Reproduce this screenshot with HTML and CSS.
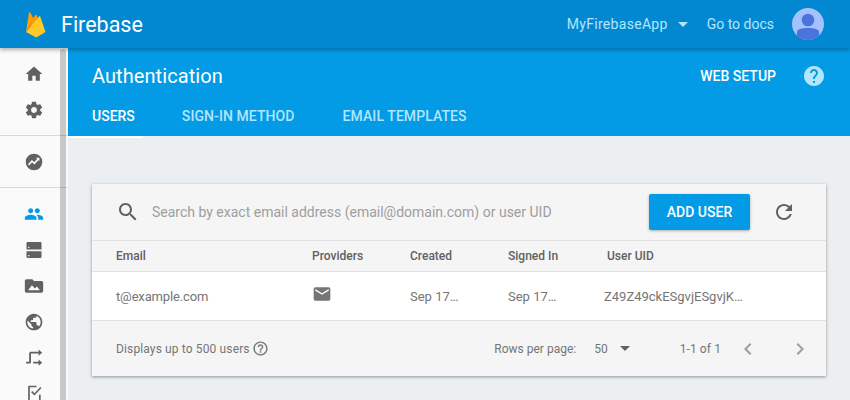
FILE: index.html
```html
<!DOCTYPE html>
<html lang="en">
<head>
  <meta charset="UTF-8">
  <title>Firebase Authentication</title>
  <link rel="stylesheet" href="styles.css">
</head>
<body>
  <header class="topbar">
    <svg class="logo" viewBox="0 0 20 27"><path fill="#ffa000" d="M0 21 3 1.500c.1-.6.8-.7 1.100-.2L7.800 8.200 9.500 5 0 21z"/><path fill="#f57c00" d="M11 12 8 6.400 0 21z"/><path fill="#ffca28" d="M0 21 13.300 5.200c.3-.3.8-.2.900.3L19.500 21l-8.400 5c-.6.300-1.200.300-1.800 0z"/><path fill="#ffa000" d="M8.400 5.300 9.500 4c.3-.4.700-.4.900 0L12 7 3.800 16z"/></svg>
    <span class="brand">Firebase</span>
    <nav class="topnav">
      <span class="project">MyFirebaseApp</span>
      <span class="caret caret-light"></span>
      <span class="docs">Go to docs</span>
      <svg class="avatar" viewBox="0 0 32 32"><clipPath id="avatar-clip"><circle cx="16" cy="16" r="16"/></clipPath><circle cx="16" cy="16" r="16" fill="#a4c1fb"/><circle cx="16" cy="12" r="6.300" fill="#4a73dc"/><path clip-path="url(#avatar-clip)" fill="#4a73dc" d="M5 32v-8c0-2.800 5-4 11-4s11 1.200 11 4v8z"/></svg>
    </nav>
  </header>

  <div class="frame">
    <aside class="sidebar">
      <div class="nav-group">
        <div class="nav-item"><svg viewBox="0 0 24 24"><path d="M10 20v-6h4v6h5v-8h3L12 3 2 12h3v8z"/></svg></div>
        <div class="nav-item"><svg viewBox="0 0 24 24"><path d="M19.430 12.980c.04-.32.07-.64.07-.98s-.03-.66-.07-.98l2.110-1.650c.19-.15.24-.42.12-.64l-2-3.460c-.12-.22-.39-.3-.61-.22l-2.490 1c-.52-.4-1.080-.73-1.690-.98l-.38-2.650C14.460 2.180 14.250 2 14 2h-4c-.25 0-.46.18-.49.42l-.38 2.650c-.61.25-1.170.59-1.690.98l-2.490-1c-.23-.09-.49 0-.61.22l-2 3.460c-.13.22-.07.49.12.64l2.110 1.650c-.04.32-.07.65-.07.98s.03.66.07.98l-2.110 1.650c-.19.15-.24.42-.12.64l2 3.460c.12.22.39.3.61.22l2.490-1c.52.4 1.080.73 1.690.98l.38 2.650c.03.24.24.42.49.42h4c.25 0 .46-.18.49-.42l.38-2.650c.61-.25 1.170-.59 1.690-.98l2.490 1c.23.09.49 0 .61-.22l2-3.460c.12-.22.07-.49-.12-.64l-2.110-1.650zM12 15.500c-1.930 0-3.500-1.570-3.500-3.500s1.570-3.500 3.500-3.500 3.500 1.570 3.500 3.500-1.570 3.500-3.500 3.500z"/></svg></div>
      </div>
      <div class="nav-group">
        <div class="nav-item"><svg viewBox="0 0 24 24"><circle cx="12" cy="12" r="10"/><path class="cut" d="M5.500 15.500 9.500 11l3 2.500L17 8.500"/><path class="cut-fill" d="M14.500 7H18.500V11z"/></svg></div>
      </div>
      <div class="nav-group">
        <div class="nav-item active"><svg viewBox="0 0 24 24"><path d="M16 11c1.660 0 2.990-1.340 2.990-3S17.660 5 16 5c-1.660 0-3 1.340-3 3s1.340 3 3 3zm-8 0c1.660 0 2.990-1.340 2.990-3S9.660 5 8 5C6.340 5 5 6.340 5 8s1.340 3 3 3zm0 2c-2.330 0-7 1.170-7 3.500V19h14v-2.500c0-2.330-4.670-3.500-7-3.500zm8 0c-.29 0-.62.02-.97.05 1.160.84 1.970 1.970 1.970 3.450V19h6v-2.500c0-2.330-4.670-3.500-7-3.500z"/></svg></div>
        <div class="nav-item"><svg viewBox="0 0 24 24"><path fill-rule="evenodd" d="M4 2.500h16c.55 0 1 .45 1 1v7.800H3V3.500c0-.55.45-1 1-1zM3 13.500h18v7c0 .55-.45 1-1 1H4c-.55 0-1-.45-1-1zM5 8v1.500h1.500V8zm0 10v1.500h1.500V18z"/></svg></div>
        <div class="nav-item"><svg viewBox="0 0 24 24"><path d="M20 6h-8l-2-2H3C1.900 4 1 4.900 1 6v12c0 1.100.9 2 2 2h18c1.100 0 2-.9 2-2V8c0-1.100-.9-2-2-2zM5 17l4.500-6 3.500 4 2.500-2.500L19 17H5z"/></svg></div>
        <div class="nav-item"><svg viewBox="0 0 24 24"><path d="M12 2C6.480 2 2 6.480 2 12s4.480 10 10 10 10-4.480 10-10S17.520 2 12 2zm-1 17.930c-3.950-.49-7-3.850-7-7.930 0-.62.08-1.210.21-1.790L9 15v1c0 1.100.9 2 2 2v1.930zm6.900-2.540c-.26-.81-1-1.390-1.900-1.390h-1v-3c0-.55-.45-1-1-1H8v-2h2c.55 0 1-.45 1-1V7h2c1.100 0 2-.9 2-2v-.41c2.930 1.190 5 4.060 5 7.410 0 2.080-.8 3.970-2.100 5.390z"/></svg></div>
        <div class="nav-item"><svg viewBox="0 0 24 24"><path d="M2.500 16.500h3.700V6.800c0-1.600 1-2.300 2.400-2.300h8.900V1.800l4.300 3.800-4.300 3.800V6.700H8.400V17c0 1-.6 1.700-1.600 1.700H2.500zM11 16.500h6.500v-2.700l4.300 3.800-4.300 3.800v-2.700H11z"/></svg></div>
        <div class="nav-item"><svg viewBox="0 0 24 24"><path d="M6.500 2H15v2H7v16h11v-7h2v7.500c0 1-.5 1.500-1.500 1.500h-12c-1 0-1.500-.5-1.500-1.500v-17C5 2.500 5.500 2 6.500 2zM8.500 10 10 8.500l2.500 2.500 7-7.500L21 4.900l-8.500 9z"/></svg></div>
      </div>
      <div class="scrollbar"></div>
    </aside>

    <main class="main">
      <section class="subheader">
        <div class="title-row">
          <h1>Authentication</h1>
          <span class="setup">WEB SETUP</span>
          <svg class="help" viewBox="0 0 24 24"><path d="M12 2C6.480 2 2 6.480 2 12s4.480 10 10 10 10-4.480 10-10S17.520 2 12 2zm1 17h-2v-2h2v2zm2.070-7.750l-.9.92C13.450 12.900 13 13.500 13 15h-2v-.5c0-1.100.45-2.100 1.170-2.830l1.240-1.260c.37-.36.59-.86.59-1.410 0-1.100-.9-2-2-2s-2 .9-2 2H8c0-2.210 1.790-4 4-4s4 1.790 4 4c0 .88-.36 1.680-.93 2.250z"/></svg>
        </div>
        <div class="tabs">
          <span class="tab tab-active">USERS</span>
          <span class="tab">SIGN-IN METHOD</span>
          <span class="tab">EMAIL TEMPLATES</span>
        </div>
      </section>

      <section class="content">
        <div class="card">
          <div class="toolbar">
            <svg class="search-icon" viewBox="0 0 24 24"><path d="M15.500 14h-.79l-.28-.27C15.410 12.590 16 11.110 16 9.500 16 5.910 13.090 3 9.500 3S3 5.910 3 9.500 5.910 16 9.500 16c1.610 0 3.090-.59 4.230-1.570l.27.28v.79l5 4.990L20.490 19l-4.990-5zm-6 0C7.010 14 5 11.990 5 9.500S7.010 5 9.500 5 14 7.010 14 9.500 11.990 14 9.500 14z"/></svg>
            <span class="search-text">Search by exact email address (email@domain.com) or user UID</span>
            <button class="add-user">ADD USER</button>
            <svg class="refresh" viewBox="0 0 24 24"><path d="M17.650 6.350C16.200 4.900 14.210 4 12 4c-4.420 0-7.990 3.580-7.990 8s3.570 8 7.990 8c3.730 0 6.840-2.550 7.730-6h-2.080c-.82 2.330-3.040 4-5.650 4-3.310 0-6-2.690-6-6s2.690-6 6-6c1.660 0 3.140.69 4.220 1.780L13 11h7V4l-2.350 2.350z"/></svg>
          </div>
          <div class="row head-row">
            <span class="col-email">Email</span>
            <span class="col-providers">Providers</span>
            <span class="col-created">Created</span>
            <span class="col-signed">Signed In</span>
            <span class="col-uid">User UID</span>
          </div>
          <div class="row user-row">
            <span class="col-email user-email">t@example.com</span>
            <span class="col-providers"><svg class="mail" viewBox="0 0 24 24"><path d="M20 4H4c-1.100 0-1.990.9-1.990 2L2 18c0 1.100.9 2 2 2h16c1.100 0 2-.9 2-2V6c0-1.100-.9-2-2-2zm0 4l-8 5-8-5V6l8 5 8-5v2z"/></svg></span>
            <span class="col-created">Sep 17…</span>
            <span class="col-signed">Sep 17…</span>
            <span class="col-uid uid-value">Z49Z49ckESgvjESgvjK…</span>
          </div>
          <div class="footer">
            <span class="limit">Displays up to 500 users</span>
            <svg class="info" viewBox="0 0 24 24"><path d="M11 18h2v-2h-2v2zm1-16C6.480 2 2 6.480 2 12s4.480 10 10 10 10-4.480 10-10S17.520 2 12 2zm0 18c-4.410 0-8-3.590-8-8s3.590-8 8-8 8 3.590 8 8-3.590 8-8 8zm0-14c-2.210 0-4 1.790-4 4h2c0-1.100.9-2 2-2s2 .9 2 2c0 2-3 1.750-3 5h2c0-2.250 3-2.500 3-5 0-2.210-1.790-4-4-4z"/></svg>
            <span class="rows-label">Rows per page:</span>
            <span class="rows-value">50</span>
            <span class="caret"></span>
            <span class="range">1-1 of 1</span>
            <svg class="chev" viewBox="0 0 24 24"><path d="M15.410 7.410L14 6l-6 6 6 6 1.410-1.410L10.830 12z"/></svg>
            <svg class="chev chev-next" viewBox="0 0 24 24"><path d="M10 6L8.590 7.410 13.170 12l-4.580 4.590L10 18l6-6z"/></svg>
          </div>
        </div>
      </section>
    </main>
  </div>
</body>
</html>
```

FILE: styles.css
```css
* {
  box-sizing: border-box;
}

html,
body {
  height: 400px;
  margin: 0;
  overflow: hidden;
}

body {
  font-family: Roboto, sans-serif;
  font-size: 13px;
  color: #757575;
  background-color: #eceff1;
}

svg {
  display: block;
  fill: currentColor;
  flex: none;
}

/* top bar */
.topbar {
  position: relative;
  z-index: 2;
  display: flex;
  align-items: center;
  height: 48px;
  padding: 0 26px;
  background-color: #0288d1;
  box-shadow: 0 2px 4px rgba(0, 0, 0, 0.3);
}

.logo {
  width: 20px;
  height: 27px;
}

.brand {
  margin-left: 15px;
  font-size: 21.5px;
  color: #fff;
}

.topnav {
  display: flex;
  align-items: center;
  margin-left: auto;
  font-size: 14px;
  color: #b3e5fc;
}

.project {
  margin-right: 10px;
  letter-spacing: 0.3px;
}

.docs {
  margin-left: 19px;
  margin-right: 18px;
}

.avatar {
  width: 32px;
  height: 32px;
}

.caret {
  width: 0;
  height: 0;
  border-left: 5px solid transparent;
  border-right: 5px solid transparent;
  border-top: 5px solid #616161;
}

.caret-light {
  border-top-color: #b3e5fc;
}

/* left nav */
.frame {
  display: flex;
  height: 352px;
  overflow: hidden;
}

.sidebar {
  position: relative;
  flex: none;
  width: 68px;
  height: 352px;
  overflow: hidden;
  background-color: #fafafa;
}

.nav-group {
  padding: 8px 0 7px;
  border-bottom: 1px solid #d8d8d8;
}

.nav-group:last-of-type {
  border-bottom: 0;
}

.nav-item {
  display: flex;
  align-items: center;
  justify-content: center;
  height: 36px;
  color: #616161;
}

.nav-item svg {
  width: 20px;
  height: 20px;
}

.nav-item.active {
  color: #039be5;
}

.scrollbar {
  position: absolute;
  top: 1px;
  bottom: 0;
  left: 60px;
  width: 6px;
  border-radius: 3px 3px 0 0;
  background-color: rgba(0, 0, 0, 0.2);
}

.cut {
  fill: none;
  stroke: #fafafa;
  stroke-width: 2;
}

.cut-fill {
  fill: #fafafa;
}

/* page */
.main {
  flex: 1;
  min-width: 0;
}

.subheader {
  height: 88px;
  padding: 0 24px;
  background-color: #039be5;
  color: #fff;
}

.title-row {
  display: flex;
  align-items: center;
  height: 56px;
}

h1 {
  margin: 0;
  font-size: 20px;
  font-weight: 400;
  letter-spacing: 0.07px;
}

.setup {
  margin-left: auto;
  font-size: 14px;
  font-weight: 500;
}

.help {
  width: 24px;
  height: 24px;
  margin-left: 26px;
  color: #b3e5fc;
}

.tabs {
  display: flex;
  height: 32px;
  padding-top: 4px;
}

.tab {
  margin-right: 48px;
  font-size: 14px;
  font-weight: 500;
  letter-spacing: 0.08px;
  color: #b3e5fc;
}

.tab-active {
  margin-right: 47px;
  letter-spacing: 0;
  color: #fff;
  position: relative;
}

.tab-active::after {
  content: "";
  position: absolute;
  left: -24px;
  right: -8px;
  top: 28px;
  height: 2px;
  background-color: #fff;
}

.content {
  padding: 48px 24px;
}

/* user table */
.card {
  height: 192px;
  background-color: #f5f5f5;
  box-shadow: 0 1px 3px rgba(0, 0, 0, 0.4);
}

.toolbar {
  display: flex;
  align-items: center;
  height: 57px;
  padding: 0 30px 0 24px;
  border-bottom: 1px solid #e0e0e0;
}

.search-icon {
  width: 24px;
  height: 24px;
  color: #616161;
}

.search-text {
  margin-left: 12px;
  font-size: 14px;
  color: #9e9e9e;
}

.add-user {
  width: 101px;
  height: 36px;
  margin-left: auto;
  border: 0;
  border-radius: 2px;
  background-color: #039be5;
  box-shadow: 0 1px 3px rgba(0, 0, 0, 0.3);
  color: #fff;
  font-family: inherit;
  font-size: 14px;
  font-weight: 500;
}

.refresh {
  width: 24px;
  height: 24px;
  margin-left: 22px;
  color: #616161;
}

.row {
  display: flex;
  align-items: center;
  padding-left: 24px;
}

.head-row {
  height: 31px;
  border-bottom: 1px solid #e0e0e0;
  font-size: 12px;
  font-weight: 500;
  color: #616161;
}

.user-row {
  height: 49px;
  border-bottom: 1px solid #e0e0e0;
  background-color: #fff;
}

.col-email {
  width: 196px;
}

.user-email {
  letter-spacing: -0.15px;
}

.col-providers {
  width: 98px;
}

.col-created {
  width: 98px;
}

.col-signed {
  width: 99px;
}

.uid-value {
  margin-left: -3px;
}

.mail {
  width: 20px;
  height: 20px;
  margin-top: -5px;
  color: #757575;
}

.footer {
  display: flex;
  align-items: center;
  height: 55px;
  padding: 0 14px 0 24px;
  font-size: 12px;
}

.limit {
  letter-spacing: 0.13px;
}

.info {
  width: 17px;
  height: 17px;
  margin-left: 2px;
}

.rows-label {
  margin-left: auto;
}

.rows-value {
  margin: 0 12px 0 18px;
}

.range {
  margin-left: 50px;
  letter-spacing: 0.1px;
}

.chev {
  width: 24px;
  height: 24px;
  margin-left: 15px;
  color: #9e9e9e;
}

.chev-next {
  margin-left: 28px;
}
```
